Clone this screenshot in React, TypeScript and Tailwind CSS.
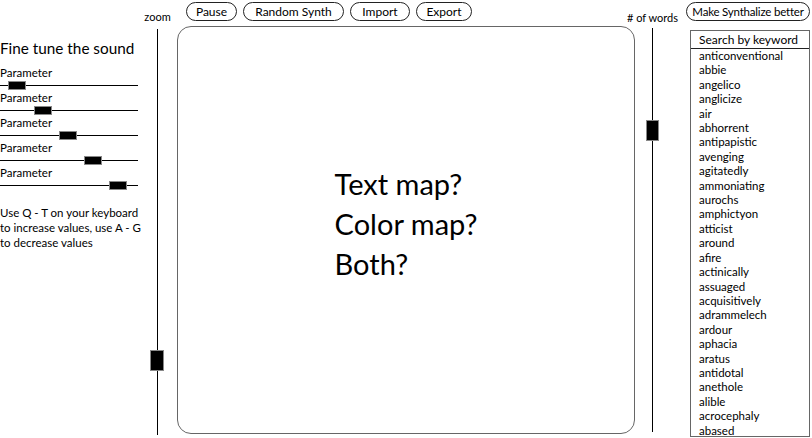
import React from "react";

const words = [
  "anticonventional","abbie","angelico","anglicize","air","abhorrent","antipapistic","avenging","agitatedly","ammoniating","aurochs","amphictyon","atticist","around","afire","actinically","assuaged","acquisitively","adrammelech","ardour","aphacia","aratus","antidotal","anethole","alible","acrocephaly","abased",
];

const thumbs = [9, 35, 60, 85, 110];

function Param({ left }: { left: number }) {
  return (
    <div className="flex flex-col">
      <div className="h-[12px] leading-[12px] text-[11.5px] whitespace-nowrap">Parameter</div>
      <div className="relative h-[13px] w-[138px] flex items-center">
        <div className="h-px w-full bg-black" />
        <div
          className="absolute top-[2.5px] h-[7px] w-[16px] bg-black outline outline-1 outline-[#888]"
          style={{ left }}
        />
      </div>
    </div>
  );
}

function Btn({ w, t = "text-[12px]", children }: { w: string; t?: string; children: React.ReactNode }) {
  return (
    <div
      className={`${w} ${t} h-[19px] rounded-full border border-[#222] flex items-center justify-center leading-none whitespace-nowrap`}
    >
      {children}
    </div>
  );
}

export default function App() {
  return (
    <div
      className="flex w-[812px] h-[438px] bg-white text-black overflow-hidden"
      style={{ fontFamily: "Lato, 'Open Sans', sans-serif" }}
    >
      {/* left panel */}
      <div className="w-[140px] shrink-0 pt-[38px] flex flex-col">
        <div className="h-[20px] leading-[20px] text-[15.3px] whitespace-nowrap">Fine tune the sound</div>
        <div className="mt-[9px] flex flex-col">
          {thumbs.map((t, i) => (
            <Param key={i} left={t} />
          ))}
        </div>
        <div className="mt-[13px] text-[11.5px] leading-[15px] whitespace-nowrap">
          <div>Use Q - T on your keyboard</div>
          <div>to increase values, use A - G</div>
          <div>to decrease values</div>
        </div>
      </div>

      {/* zoom column */}
      <div className="w-[35px] shrink-0 flex flex-col items-center">
        <div className="h-[29px] pt-[11px] text-[11px] leading-[12px] whitespace-nowrap">zoom</div>
        <div className="relative w-px flex-1 bg-black mb-[3px]">
          <div className="absolute left-[-6px] top-[322px] w-[12px] h-[19px] bg-black outline outline-1 outline-[#888]" />
        </div>
      </div>

      {/* center column */}
      <div className="ml-[2px] w-[458px] shrink-0 flex flex-col">
        <div className="h-[26px] pt-[2px] pl-[9px] flex gap-[6px]">
          <Btn w="w-[51px]">Pause</Btn>
          <Btn w="w-[101px]">Random Synth</Btn>
          <Btn w="w-[60px]">Import</Btn>
          <Btn w="w-[56px]">Export</Btn>
        </div>
        <div className="flex-1 mb-[4px] rounded-[14px] border-[1.5px] border-[#666] flex items-center justify-center">
          <div className="text-[29px] leading-[40px] -mt-[12px]">
            <div>Text map?</div>
            <div>Color map?</div>
            <div>Both?</div>
          </div>
        </div>
      </div>

      {/* words column */}
      <div className="w-[35px] shrink-0 flex flex-col items-center">
        <div className="h-[28px] pt-[12px] text-[11px] leading-[12px] whitespace-nowrap">
          # of words
        </div>
        <div className="relative w-px flex-1 bg-black mb-[6px]">
          <div className="absolute left-[-5px] top-[93px] w-[11px] h-[19px] bg-black outline outline-1 outline-[#888]" />
        </div>
      </div>

      {/* right column */}
      <div className="ml-[16px] w-[125px] shrink-0 flex flex-col pt-[2px]">
        <Btn w="w-[124px]" t="text-[11.5px] tracking-[-0.2px]">Make Synthalize better</Btn>
        <div className="mt-[9px] ml-[4px] w-[120px] h-[407px] border border-[#666] flex flex-col overflow-hidden">
          <div className="h-[18px] shrink-0 border-b border-[#222] pl-[8px] text-[12px] leading-[17px] whitespace-nowrap">
            Search by keyword
          </div>
          <div className="flex flex-col pl-[8px]">
            {words.map((w) => (
              <div key={w} className="h-[14.42px] leading-[14.42px] text-[11.5px] whitespace-nowrap">
                {w}
              </div>
            ))}
          </div>
        </div>
      </div>
    </div>
  );
}
